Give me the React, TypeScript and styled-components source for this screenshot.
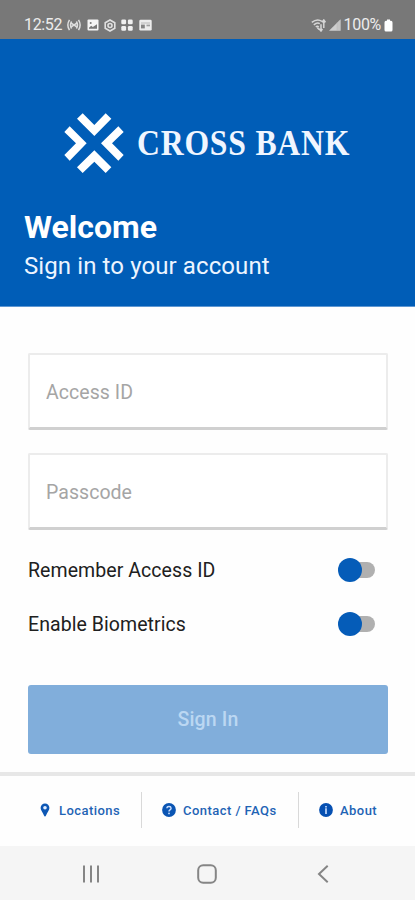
import React from "react";
import styled, { createGlobalStyle } from "styled-components";

const GlobalStyle = createGlobalStyle`
  * { box-sizing: border-box; }
  body { margin: 0; background: #fefefe; font-family: Roboto, "Liberation Sans", sans-serif; }
`;

const Screen = styled.div`
  display: flex;
  flex-direction: column;
  width: 415px;
  height: 900px;
  overflow: hidden;
  background: #fefefe;
`;

const StatusBar = styled.div`
  display: flex;
  flex: none;
  justify-content: space-between;
  align-items: flex-start;
  height: 39px;
  padding: 16px 22px 0 24px;
  background: #787878;
  color: #ececec;
`;

const StatusGroup = styled.div<{ $gap: number }>`
  display: flex;
  align-items: center;
  gap: ${({ $gap }) => $gap}px;
  height: 18px;
`;

const StatusText = styled.span<{ $spacing: number }>`
  font-size: 16px;
  line-height: 18px;
  letter-spacing: ${({ $spacing }) => $spacing}px;
  white-space: nowrap;
`;

const Icon = styled.svg`
  display: block;
  flex: none;
`;

const Header = styled.header`
  flex: none;
  height: 268px;
  padding: 73px 24px 0;
  background: #005db7;
  border-bottom: 1px solid #5e97d2;
  color: #fff;
`;

const Brand = styled.div`
  display: flex;
  align-items: center;
  height: 62px;
  margin-left: 39px;
  gap: 12px;
`;

const BrandName = styled.span`
  padding-top: 1px;
  font: bold 35px/40px "Liberation Serif", serif;
  letter-spacing: 0.9px;
  white-space: nowrap;
  transform: scaleX(0.905);
  transform-origin: left;
  color: #f0f6ff;
`;

const Welcome = styled.h1`
  margin: 34px 0 0;
  font-size: 32px;
  line-height: 38px;
  font-weight: 700;
`;

const Subtitle = styled.p`
  margin: 5px 0 0;
  font-size: 24px;
  line-height: 30px;
  letter-spacing: 0.1px;
  color: #edf5ff;
`;

const Form = styled.form`
  display: flex;
  flex-direction: column;
  flex: none;
  height: 465px;
  padding: 46px 27px 0 28px;
`;

const Field = styled.input`
  width: 360px;
  height: 77px;
  margin: 0 0 23px;
  padding: 2px 16px 0;
  border: 2px solid #ececec;
  border-bottom: 3px solid #d0d0d0;
  border-radius: 2px;
  background: #fff;
  outline: none;
  font: 19.5px/24px Roboto, sans-serif;
  letter-spacing: 0.05px;
  &::placeholder { color: #a5a5a5; opacity: 1; }
`;

const Option = styled.label`
  display: flex;
  align-items: center;
  justify-content: space-between;
  height: 54px;
  padding-right: 13px;
  font-size: 19.5px;
  letter-spacing: 0.07px;
  color: #202020;
`;

const Options = styled.div`
  margin-top: -10px;
`;

const Switch = styled.span`
  display: flex;
  align-items: center;
  width: 32px;
  height: 16px;
  margin-bottom: 1px;
  border-radius: 8px;
  background: #b0b0b0;
  &::before {
    content: "";
    width: 24px;
    height: 24px;
    margin-left: -5px;
    border-radius: 50%;
    background: #055cb8;
  }
`;

const SubmitButton = styled.button`
  height: 69px;
  margin-top: 34px;
  padding: 0;
  border: 0;
  border-radius: 3px;
  background: #81aedb;
  color: #bbd7f2;
  font: 500 19.5px/24px Roboto, sans-serif;
  letter-spacing: 0.15px;
`;

const Footer = styled.footer`
  display: flex;
  flex: none;
  height: 74px;
  border-top: 4px solid #e7e7e7;
  padding-top: 16px;
`;

const FooterLink = styled.a<{ $width: number; $inset: number; $gap: number; $divider?: boolean }>`
  display: flex;
  align-items: center;
  width: ${({ $width }) => $width}px;
  height: 36px;
  padding-left: ${({ $inset }) => $inset}px;
  gap: ${({ $gap }) => $gap}px;
  border-right: ${({ $divider }) => ($divider ? "1px solid #d9d9d9" : "0")};
  color: #1f64b5;
  font-size: 13px;
  font-weight: 500;
  letter-spacing: 0.45px;
  white-space: nowrap;
`;

const NavBar = styled.nav`
  display: flex;
  flex: none;
  align-items: center;
  height: 54px;
  padding: 1px 86px 0 81px;
  gap: 96px;
  background: #f5f5f5;
`;

const BankMark = () => (
  <Icon width="62" height="62" viewBox="39 36 186 186" fill="#fff">
    <path d="M81 56 98 40 133 75 167 40 184 56 133 108Z" />
    <path d="M43 96 59 79 110 130 59 182 43 165 78 130Z" />
    <path d="M221 96 205 79 153 130 205 182 221 165 186 130Z" />
    <path d="M81 202 98 219 133 185 167 219 184 202 133 151Z" />
  </Icon>
);

const BroadcastIcon = () => (
  <Icon width="14" height="12" viewBox="0 0 14 12" fill="none" stroke="#dedede" strokeWidth="1.5">
    <path d="M2.5.8Q-.8 6 2.5 11.2M11.5.8Q14.8 6 11.5 11.2M4.6 2.5Q2.4 6 4.6 9.5M9.4 2.5Q11.6 6 9.4 9.5M4.6 4.3 9.4 7.7M9.4 4.3 4.6 7.7" />
  </Icon>
);

const GalleryIcon = () => (
  <Icon width="12" height="12" viewBox="0 0 12 12">
    <rect x=".5" y=".5" width="11" height="11" rx="1" fill="#f5f5f5" />
    <path d="M2 8.8 4.2 6.8 5.8 8 10 5.2V9.8H2Z" fill="#787878" />
    <circle cx="3.7" cy="3.9" r="1" fill="#787878" />
  </Icon>
);

const HexIcon = () => (
  <Icon width="12" height="13" viewBox="0 0 12 13" fill="none" stroke="#e0e0e0" strokeWidth="1.6">
    <path d="M6 1 10.8 3.7V9.3L6 12 1.2 9.3V3.7Z" />
    <circle cx="6" cy="6.5" r="2" />
  </Icon>
);

const GridIcon = () => (
  <Icon width="12" height="12" viewBox="0 0 12 12" fill="#f0f0f0">
    <rect x=".3" y=".5" width="4.8" height="4.8" rx="1.3" />
    <rect x="6.9" y=".5" width="4.8" height="4.8" rx="1.3" />
    <rect x=".3" y="6.9" width="4.8" height="4.8" rx="1.3" />
    <rect x="6.9" y="6.9" width="4.8" height="4.8" rx="1.3" />
  </Icon>
);

const NewsIcon = () => (
  <Icon width="13" height="12" viewBox="0 0 13 12">
    <rect x=".3" y=".7" width="12.4" height="10.8" rx="1.2" fill="#ededed" />
    <path d="M2 4H11" stroke="#b8b8b8" />
    <rect x="2" y="5.6" width="3.8" height="3.8" fill="#868686" />
    <rect x="7.5" y="5.6" width="3.5" height="1.7" fill="#a0a0a0" />
  </Icon>
);

const WifiIcon = () => (
  <Icon width="15" height="13" viewBox="0 0 15 13" fill="none" stroke="#d6d6d6" strokeWidth="1.5">
    <path d="M.8 3.3Q6.2-.9 11 2.4M2.8 5.8Q6.1 3.1 8.8 4.7M4.8 8Q6.2 6.8 7.8 7.8M6.3 8.5 8 10.4" />
    <path d="M10 11.8V5.2M8 9.7 10 12 11.4 10M12.8 1V9M11 3.3 12.8 1 14.4 3.3" />
  </Icon>
);

const SignalIcon = () => (
  <Icon width="12" height="12" viewBox="0 0 12 12">
    <path d="M0 11.8 11.6.2V11.8Z" fill="#cecece" />
    <path d="M8.2 3.5V11.8M10 1.8V11.8" stroke="#b0b0b0" strokeWidth=".6" />
  </Icon>
);

const BatteryIcon = () => (
  <Icon width="9" height="13" viewBox="0 0 9 13" fill="#fff">
    <path d="M3 .5H6V1.7H7Q8.5 1.7 8.5 3.5V11Q8.5 12.5 7 12.5H2Q.5 12.5 .5 11V3.5Q.5 1.7 2 1.7H3Z" />
  </Icon>
);

const PinIcon = () => (
  <Icon width="10" height="14" viewBox="0 0 10 14">
    <path d="M5 .5A4.4 4.4 0 0 0 .6 4.9C.6 7.5 3 9.3 4 12.5Q4.3 13.5 5 13.5T6 12.5C7 9.3 9.4 7.5 9.4 4.9A4.4 4.4 0 0 0 5 .5Z" fill="#0d57b4" />
    <circle cx="5" cy="4.8" r="1.8" fill="#e3eeff" />
  </Icon>
);

const HelpIcon = () => (
  <Icon width="14" height="14" viewBox="0 0 14 14" fill="none">
    <circle cx="7" cy="7" r="6.9" fill="#0b55b3" />
    <path d="M4.9 5.3Q5 3.5 7 3.5T9.1 5.2Q9.1 6.1 8 6.8T7 8.5" stroke="#cbdfff" strokeWidth="1.4" />
    <circle cx="7" cy="10.4" r=".9" fill="#cbdfff" />
  </Icon>
);

const InfoIcon = () => (
  <Icon width="14" height="14" viewBox="0 0 14 14">
    <circle cx="7" cy="7" r="6.9" fill="#0650b2" />
    <path d="M6.1 3H7.9V4.6H6.1ZM6.1 5.3H7.9V11H6.1Z" fill="#b5d0f8" />
  </Icon>
);

const RecentsIcon = () => (
  <Icon width="20" height="20" viewBox="0 0 20 20" stroke="#858585" strokeWidth="2">
    <path d="M3 1.5V18.5M10 1.5V18.5M17 1.5V18.5" />
  </Icon>
);

const HomeIcon = () => (
  <Icon width="20" height="20" viewBox="0 0 20 20" fill="none" stroke="#858585" strokeWidth="2">
    <rect x="1.2" y="1.3" width="17.6" height="17.4" rx="5" />
  </Icon>
);

const BackIcon = () => (
  <Icon width="12" height="20" viewBox="0 0 12 20" fill="none" stroke="#858585" strokeWidth="2">
    <path d="M10.7 1.8 2 10 10.7 18.2" />
  </Icon>
);

const BackSlot = styled.span`
  margin-left: 4px;
`;

export default function App() {
  return (
    <>
      <GlobalStyle />
      <Screen>
        <StatusBar>
          <StatusGroup $gap={5.3}>
            <StatusText $spacing={-0.35}>12:52</StatusText>
            <BroadcastIcon />
            <GalleryIcon />
            <HexIcon />
            <GridIcon />
            <NewsIcon />
          </StatusGroup>
          <StatusGroup $gap={3}>
            <WifiIcon />
            <SignalIcon />
            <StatusText $spacing={-0.3}>100%</StatusText>
            <BatteryIcon />
          </StatusGroup>
        </StatusBar>
        <Header>
          <Brand>
            <BankMark />
            <BrandName>CROSS BANK</BrandName>
          </Brand>
          <Welcome>Welcome</Welcome>
          <Subtitle>Sign in to your account</Subtitle>
        </Header>
        <Form>
          <Field placeholder="Access ID" />
          <Field placeholder="Passcode" type="password" />
          <Options>
            <Option>
              Remember Access ID
              <Switch />
            </Option>
            <Option>
              Enable Biometrics
              <Switch />
            </Option>
          </Options>
          <SubmitButton type="button">Sign In</SubmitButton>
        </Form>
        <Footer>
          <FooterLink $width={142} $inset={40} $gap={9} $divider>
            <PinIcon />
            Locations
          </FooterLink>
          <FooterLink $width={157} $inset={20} $gap={7} $divider>
            <HelpIcon />
            Contact / FAQs
          </FooterLink>
          <FooterLink $width={116} $inset={20} $gap={7}>
            <InfoIcon />
            About
          </FooterLink>
        </Footer>
        <NavBar>
          <RecentsIcon />
          <HomeIcon />
          <BackSlot>
            <BackIcon />
          </BackSlot>
        </NavBar>
      </Screen>
    </>
  );
}
